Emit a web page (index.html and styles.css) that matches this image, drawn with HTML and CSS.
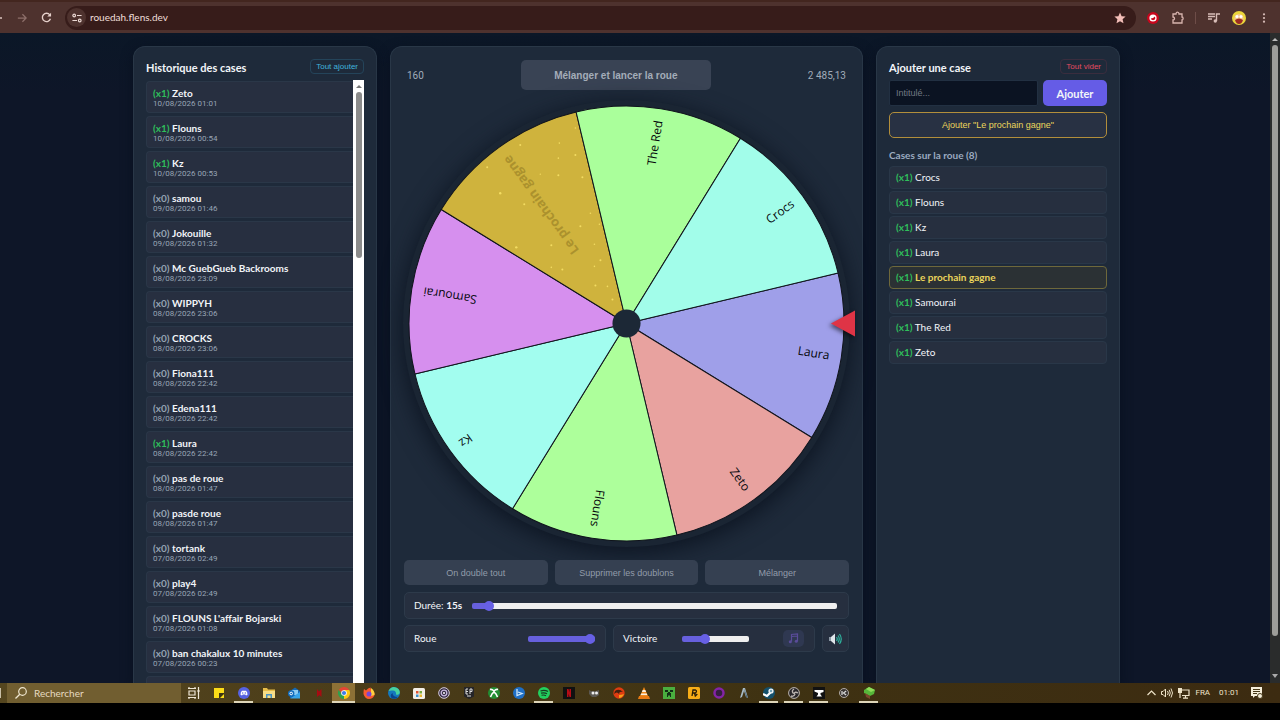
FILE: index.html
```html
<!DOCTYPE html>
<html lang="fr">
<head>
<meta charset="utf-8">
<title>Roue</title>
<link rel="stylesheet" href="styles.css">
</head>
<body>
<header class="toolbar">
  <button class="tool back" aria-label="Précédent"><svg width="12" height="12" viewBox="0 0 12 12"><path d="M1 6h10M6 1L1 6l5 5" fill="none" stroke="#dcc5c0" stroke-width="1.3"/></svg></button>
  <button class="tool" aria-label="Suivant"><svg width="10" height="10" viewBox="0 0 12 12"><path d="M1 6h10M6.500 1.500L11 6l-4.500 4.500" fill="none" stroke="#8d6f6a" stroke-width="1.500"/></svg></button>
  <button class="tool" aria-label="Actualiser"><svg width="11" height="11" viewBox="0 0 12 12"><path d="M10.300 7.300A4.500 4.500 0 1 1 9.600 3.200" fill="none" stroke="#e5d0cb" stroke-width="1.500"/><path d="M11 .8v4.200H6.800z" fill="#e5d0cb"/></svg></button>
  <div class="omnibox">
    <span class="site"><svg width="10" height="10" viewBox="0 0 12 12"><g fill="none" stroke="#ecd9d4" stroke-width="1.400"><circle cx="2.600" cy="3" r="1.600"/><path d="M6 3h5.500M.5 9H6"/><circle cx="9.300" cy="9" r="1.600"/></g></svg></span>
    <span class="url">rouedah.flens.dev</span>
    <svg class="star" width="12" height="12" viewBox="0 0 12 12"><path d="M6 .5l1.600 3.700 4 .4-3 2.700.9 4L6 9.200l-3.500 2.100.9-4-3-2.700 4-.4z" fill="#f2bdb7"/></svg>
  </div>
  <div class="extensions">
    <button class="tool" aria-label="Extension"><svg width="12" height="12" viewBox="0 0 12 12"><circle cx="6" cy="6" r="6" fill="#c9061d"/><circle cx="6" cy="6" r="3.600" fill="#fff"/><path d="M3.800 6.500a2.300 2.300 0 0 0 4.500 0L8 4.500 6 6z" fill="#c9061d"/></svg></button>
    <button class="tool" aria-label="Extensions"><svg width="13" height="13" viewBox="0 0 13 13"><path d="M2 3h3c0-2.500 3-2.500 3 0h3v3c1.500 0 1.500 3 0 3v3H2V9c2 0 2-3 0-3z" fill="none" stroke="#d8b5af" stroke-width="1.300"/></svg></button>
    <i class="divider"></i>
    <button class="tool" aria-label="Médias"><svg width="12" height="10" viewBox="0 0 12 10"><path d="M0 1h7M0 3.500h7M0 6h4M8.500 8V1H12" fill="none" stroke="#d8bdb8" stroke-width="1.400"/><circle cx="7.300" cy="8" r="1.700" fill="#d8bdb8"/></svg></button>
    <button class="tool" aria-label="Profil"><svg width="14" height="14" viewBox="0 0 14 14"><circle cx="7" cy="7" r="7" fill="#ead53a"/><circle cx="7" cy="7.500" r="4.600" fill="#f6c78d"/><path d="M3 9q4-3 8 0-1 4-4 4T3 9" fill="#9b2b22"/><circle cx="5" cy="5.500" r="1.500" fill="#fff"/><circle cx="9" cy="5.500" r="1.500" fill="#fff"/></svg></button>
    <button class="tool" aria-label="Menu"><svg width="4" height="10" viewBox="0 0 4 10"><g fill="#d8bdb8"><circle cx="2" cy="1.300" r="1.100"/><circle cx="2" cy="5" r="1.100"/><circle cx="2" cy="8.700" r="1.100"/></g></svg></button>
  </div>
</header>

<div class="viewport">
<main class="page">
  <section class="panel history">
    <div class="panel-head"><h2>Historique des cases</h2><button class="mini add-all">Tout ajouter</button></div>
    <div class="scroller">
      <ul class="log">
        <li><b class="on">(x1)</b> <strong>Zeto</strong><time>10/08/2026 01:01</time></li>
        <li><b class="on">(x1)</b> <strong>Flouns</strong><time>10/08/2026 00:54</time></li>
        <li><b class="on">(x1)</b> <strong>Kz</strong><time>10/08/2026 00:53</time></li>
        <li><b>(x0)</b> <strong>samou</strong><time>09/08/2026 01:46</time></li>
        <li><b>(x0)</b> <strong>Jokouille</strong><time>09/08/2026 01:32</time></li>
        <li><b>(x0)</b> <strong>Mc GuebGueb Backrooms</strong><time>08/08/2026 23:09</time></li>
        <li><b>(x0)</b> <strong>WIPPYH</strong><time>08/08/2026 23:06</time></li>
        <li><b>(x0)</b> <strong>CROCKS</strong><time>08/08/2026 23:06</time></li>
        <li><b>(x0)</b> <strong>Fiona111</strong><time>08/08/2026 22:42</time></li>
        <li><b>(x0)</b> <strong>Edena111</strong><time>08/08/2026 22:42</time></li>
        <li><b class="on">(x1)</b> <strong>Laura</strong><time>08/08/2026 22:42</time></li>
        <li><b>(x0)</b> <strong>pas de roue</strong><time>08/08/2026 01:47</time></li>
        <li><b>(x0)</b> <strong>pasde roue</strong><time>08/08/2026 01:47</time></li>
        <li><b>(x0)</b> <strong>tortank</strong><time>07/08/2026 02:49</time></li>
        <li><b>(x0)</b> <strong>play4</strong><time>07/08/2026 02:49</time></li>
        <li><b>(x0)</b> <strong>FLOUNS L'affair Bojarski</strong><time>07/08/2026 01:08</time></li>
        <li><b>(x0)</b> <strong>ban chakalux 10 minutes</strong><time>07/08/2026 00:23</time></li>
        <li class="next"></li>
      </ul>
      <div class="list-bar"><i class="arrow-up"></i><i class="list-thumb"></i></div>
    </div>
  </section>

  <section class="panel game">
    <div class="launch-row"><span>160</span><button class="launch">Mélanger et lancer la roue</button><span>2 485,13</span></div>
    <svg class="wheel" viewBox="-222 -222 444 444" role="img" aria-label="Roue">
      <circle class="ring" r="223"/>
      <g class="slices">
        <path fill="#9f9fe9" d="M0 0L211.100-50.300A217 217 0 0 1 184.800 113.700z"/>
        <path fill="#e8a29f" d="M0 0L184.800 113.700A217 217 0 0 1 50.300 211.100z"/>
        <path fill="#adff9b" d="M0 0L50.300 211.100A217 217 0 0 1-113.700 184.800z"/>
        <path fill="#a2fdef" d="M0 0L-113.700 184.800A217 217 0 0 1-211.100 50.300z"/>
        <path fill="#d68fee" d="M0 0L-211.100 50.300A217 217 0 0 1-184.800-113.700z"/>
        <path fill="#cfb33d" d="M0 0L-184.800-113.700A217 217 0 0 1-50.300-211.100z"/>
        <path fill="#aaff9b" d="M0 0L-50.300-211.100A217 217 0 0 1 113.700-184.800z"/>
        <path fill="#a2fdea" d="M0 0L113.700-184.800A217 217 0 0 1 211.100-50.300z"/>
      </g>
      <g fill="#f3dc62">
        <circle cx="-106" cy="-178" r="1"/><circle cx="-67" cy="-180" r=".8"/><circle cx="-51" cy="-195" r=".8"/><circle cx="-51" cy="-168" r="1"/><circle cx="-68" cy="-165" r=".8"/><circle cx="-139" cy="-156" r="1"/><circle cx="-86" cy="-149" r=".7"/><circle cx="-68" cy="-148" r="1"/><circle cx="-44" cy="-146" r="1"/><circle cx="-126" cy="-130" r="1.200"/><circle cx="-102" cy="-119" r="1"/><circle cx="-36" cy="-110" r=".8"/><circle cx="-46" cy="-97" r="1"/><circle cx="-27" cy="-99" r=".8"/><circle cx="-75" cy="-78" r="1"/><circle cx="-32" cy="-79" r=".8"/><circle cx="-110" cy="-76" r="1.200"/><circle cx="-26" cy="-63" r="1"/><circle cx="-32" cy="-57" r=".8"/><circle cx="-75" cy="-56" r=".8"/><circle cx="-64" cy="-54" r="1"/><circle cx="-31" cy="-38" r="1"/><circle cx="-19" cy="-37" r=".8"/><circle cx="-14" cy="-24" r="1"/>
      </g>
      <g class="names" text-anchor="end">
        <text transform="rotate(9)" x="205" y="4">Laura</text>
        <text transform="rotate(54)" x="205" y="4">Zeto</text>
        <text transform="rotate(99)" x="205" y="4">Flouns</text>
        <text transform="rotate(144)" x="205" y="4">Kz</text>
        <text transform="rotate(189)" x="205" y="4">Samourai</text>
        <text class="gold" transform="rotate(234)" x="205" y="5">Le prochain gagne</text>
        <text transform="rotate(279)" x="205" y="4">The Red</text>
        <text transform="rotate(324)" x="205" y="4">Crocs</text>
      </g>
      <circle class="hub" r="14"/>
      <path class="pointer" d="M204 0L228-13V13z"/>
    </svg>
    <div class="actions"><button>On double tout</button><button>Supprimer les doublons</button><button>Mélanger</button></div>
    <div class="box duration"><label for="dur">Durée: <b>15s</b></label><input id="dur" type="range" min="5" max="300" value="15" style="--fill:5%"></div>
    <div class="volumes">
      <div class="box"><label for="vr">Roue</label><input id="vr" class="small" type="range" value="100" style="--fill:100%"></div>
      <div class="box"><label for="vv">Victoire</label><input id="vv" class="small" type="range" value="32" style="--fill:34%">
        <button class="music" aria-label="Musique"><svg width="11" height="11" viewBox="0 0 11 11"><path d="M3.500 8.500V1.500L9.500 1v7M3.500 3.500L9.500 3" fill="none" stroke="#5a4c9a" stroke-width="1.200"/><circle cx="2.300" cy="8.800" r="1.500" fill="#5a4c9a"/><circle cx="8.300" cy="8.300" r="1.500" fill="#5a4c9a"/></svg></button></div>
      <button class="box mute" aria-label="Son"><svg width="13" height="12" viewBox="0 0 13 12"><path d="M0 4h2v4H0z" fill="#8d99a5"/><path d="M2 4l4-3.500v11L2 8z" fill="#dfe5ea"/><path d="M7.500 4q1.500 2 0 4M9 2.500q2.500 3.500 0 7M10.500 1q3.500 5 0 10" fill="none" stroke="#2eb5a0" stroke-width="1.200"/></svg></button>
    </div>
  </section>

  <section class="panel cases">
    <div class="panel-head"><h2>Ajouter une case</h2><button class="mini clear">Tout vider</button></div>
    <form class="add-form"><input type="text" placeholder="Intitulé..." aria-label="Intitulé"><button type="button">Ajouter</button></form>
    <button class="next-wins">Ajouter "Le prochain gagne"</button>
    <h3>Cases sur la roue (8)</h3>
    <ul class="slots">
      <li><b>(x1)</b> Crocs</li><li><b>(x1)</b> Flouns</li><li><b>(x1)</b> Kz</li><li><b>(x1)</b> Laura</li>
      <li class="special"><b>(x1)</b> <strong>Le prochain gagne</strong></li>
      <li><b>(x1)</b> Samourai</li><li><b>(x1)</b> The Red</li><li><b>(x1)</b> Zeto</li>
    </ul>
  </section>
</main>
<div class="page-bar"><i class="arrow-up"></i><i class="page-thumb"></i><i class="arrow-down"></i></div>
</div>

<footer class="taskbar">
  <i class="start"></i>
  <label class="search"><svg width="12" height="12" viewBox="0 0 12 12"><circle cx="7.500" cy="4.500" r="3.800" fill="none" stroke="#efe6cf" stroke-width="1.200"/><path d="M4.800 7.200L.5 11.500" stroke="#efe6cf" stroke-width="1.300"/></svg><input type="text" placeholder="Rechercher" aria-label="Rechercher"></label>
  <nav class="apps">
    <span><svg viewBox="0 0 12 12"><path d="M0 1.500h8M0 10.500h8M1 4h6v4H1zM1 0v2M7 0v2M1 10v2M7 10v2M10.500 0v12" fill="none" stroke="#eee6d5" stroke-width="1.200"/><path d="M9.500 3h2v2h-2z" fill="#eee6d5"/></svg></span>
    <span><svg viewBox="0 0 12 12"><path d="M1 1h10v10H1z" fill="#fcdc18"/><path d="M6 6h5v1L7 11H6z" fill="#3d3413"/></svg></span>
    <span class="open"><svg viewBox="0 0 12 12"><circle cx="6" cy="6" r="6" fill="#5662e2"/><path d="M2.500 7.800Q2.500 5 4 3.800l4 0Q9.500 5 9.500 7.800L8 8.500 7.300 7.600H4.700L4 8.500z" fill="#fff"/><circle cx="4.700" cy="6" r=".7" fill="#5662e2"/><circle cx="7.300" cy="6" r=".7" fill="#5662e2"/></svg></span>
    <span><svg viewBox="0 0 12 12"><path d="M0 1h4l1 1.500h7V11H0z" fill="#e7bd49"/><path d="M0 4h12v7H0z" fill="#f7dd87"/><path d="M3 7h6v4H7.500V8.500h-3V11H3z" fill="#4a93c4"/></svg></span>
    <span><svg viewBox="0 0 12 12"><path d="M2 4l5-3.500L12 4v7H2z" fill="#1769b5"/><path d="M4 3h6v5H4z" fill="#8ccbf2"/><path d="M2 11.500l10-6.500v6.500z" fill="#38a5ea"/><circle cx="3.200" cy="6.500" r="3.200" fill="#126dbe"/><circle cx="3.200" cy="6.500" r="1.300" fill="none" stroke="#fff"/></svg></span>
    <span><svg viewBox="0 0 12 12"><path d="M4 2l2 2.500L8.500 2v8L6.500 8 4 10z" fill="#a70b12"/></svg></span>
    <span class="open active"><svg viewBox="0 0 12 12"><path d="M6 6L.8 3A6 6 0 0 1 11.200 3z" fill="#e64435"/><path d="M6 6V3h5.200A6 6 0 0 1 6 12z" fill="#fbc812"/><path d="M6 6l0 6A6 6 0 0 1 .8 3L3.500 7.500z" fill="#2ca34c"/><circle cx="6" cy="6" r="2.800" fill="#fff"/><circle cx="6" cy="6" r="2.100" fill="#3d7de8"/></svg></span>
    <span><svg viewBox="0 0 12 12"><path d="M1 2l2 1.500Q5 1 7.500.5L8 2.500Q12 4 11.500 8 10 12 6 12T.5 7Q.3 4 1 2z" fill="#fa5b31"/><path d="M8 1q4 3 3.500 7L8 9z" fill="#ffd13d"/><circle cx="6" cy="7" r="2.500" fill="#7a46d5"/></svg></span>
    <span><svg viewBox="0 0 12 12"><circle cx="6" cy="6" r="6" fill="#1478bd"/><path d="M.5 4Q3-.5 7 .2 12 1.500 11.800 6 11 8.500 8 7.500 8.500 4 5 3.500 2 3.300.5 4" fill="#47d1a0"/><path d="M4.500 6q0 4 5.500 4-3 3-6.500 1-2-3 1-5" fill="#0a438d"/></svg></span>
    <span><svg viewBox="0 0 12 12"><rect y="1" width="12" height="11" rx="1.500" fill="#f3efe7"/><path d="M3 4h2.500v2.500H3z" fill="#e15433"/><path d="M6.500 4H9v2.500H6.500z" fill="#78a93c"/><path d="M3 7.500h2.500V10H3z" fill="#3a91cf"/><path d="M6.500 7.500H9V10H6.500z" fill="#e8b72e"/></svg></span>
    <span><svg viewBox="0 0 12 12"><circle cx="6" cy="6" r="5.300" fill="#332b42" stroke="#d7cde2"/><circle cx="6" cy="6" r="2.800" fill="none" stroke="#c6b8df" stroke-width="1.300"/><circle cx="6" cy="6" r="1" fill="#fff"/></svg></span>
    <span><svg viewBox="0 0 12 12"><path d="M1 0h10v9.500L6 12 1 9.500z" fill="#252528"/><path d="M3 2v5M3 2h2M3 4.500h2M3 7h2M7 7V2h2v2.500H7M4 9h4" fill="none" stroke="#ddd"/></svg></span>
    <span><svg viewBox="0 0 12 12"><circle cx="6" cy="6" r="6" fill="#228d32"/><path d="M2 2.500Q4 2 6 4q2-2 4-1.500M2.500 10Q4 6 6 5q2 1 3.500 5" fill="none" stroke="#fff" stroke-width="1.600"/></svg></span>
    <span><svg viewBox="0 0 12 12"><circle cx="6" cy="6" r="6" fill="#1f6fc5"/><path d="M4 2v6.500l5-2L5 5" fill="none" stroke="#cfe8fb" stroke-width="1.300"/></svg></span>
    <span class="open"><svg viewBox="0 0 12 12"><circle cx="6" cy="6" r="6" fill="#22d05e"/><path d="M2.500 4q4-1.300 7.500.5M3 6.200q3.500-1 6 .5M3.500 8.300q2.500-.8 4.500.4" fill="none" stroke="#173e22" stroke-width="1.200"/></svg></span>
    <span><svg viewBox="0 0 12 12"><path d="M0 0h12v12H0z" fill="#111"/><path d="M4 2h1.500L8 10H6.500zM4 2h1.500v8H4zM6.500 2H8v8H6.500z" fill="#b60c16"/></svg></span>
    <span><svg viewBox="0 0 12 12"><path d="M1 3l2 1h5l3-1v5l-3 2H4L1 7z" fill="#5b5852"/><circle cx="5" cy="6" r="1.500" fill="#eee"/><circle cx="8.500" cy="6" r="1.500" fill="#eee"/></svg></span>
    <span><svg viewBox="0 0 12 12"><circle cx="6" cy="6" r="5.700" fill="#df3c11"/><path d="M2 4q4-3 8 1Q6 4 6 7q-2-3-5 0" fill="#42200f"/><path d="M6 8q3 0 5-1-2 4-5 4z" fill="#f5a019"/></svg></span>
    <span><svg viewBox="0 0 12 12"><path d="M6 0l4 9H2z" fill="#f18a1d"/><path d="M4.700 3h2.600l.8 2H3.900zM3.200 6.500h5.600l.5 1.500H2.600z" fill="#f8eee0"/><path d="M1 9h10l1 3H0z" fill="#e97b14"/></svg></span>
    <span><svg viewBox="0 0 12 12"><path d="M0 0h12v12H0z" fill="#4aae3f"/><path d="M2 3h3v2H2zM7 3h3v2H7zM5 5h2v1h1v4H7V8.500H5V10H4V6h1z" fill="#113016"/></svg></span>
    <span><svg viewBox="0 0 12 12"><rect width="12" height="12" rx="1.500" fill="#f7ad17"/><path d="M4 9l1-6h2.500q2 1 0 3H4.500M6.500 6l.8 3 2-2" fill="none" stroke="#281d08" stroke-width="1.300"/></svg></span>
    <span><svg viewBox="0 0 12 12"><circle cx="6" cy="6" r="4.500" fill="#351e41" stroke="#8424a6" stroke-width="2.500"/></svg></span>
    <span><svg viewBox="0 0 12 12"><path d="M2 11L5 1h2l3 10-2-1-2-6-2 6z" fill="#a8bbc6"/><path d="M6 1l4 10-2-1z" fill="#516b7d"/></svg></span>
    <span class="open"><svg viewBox="0 0 12 12"><circle cx="6" cy="6" r="6" fill="#14506b"/><path d="M0 7l4 2 4-4" fill="none" stroke="#fff" stroke-width="2.200"/><circle cx="8" cy="4" r="2.600" fill="#eef2f4"/><circle cx="8" cy="4" r="1.200" fill="#6fa3b8"/></svg></span>
    <span class="open"><svg viewBox="0 0 12 12"><circle cx="6" cy="6" r="5.400" fill="#29272b" stroke="#bcb5b1"/><path d="M6 2Q3 4 5.500 6.500M10 6q-3-2-4 1M3 9q3 1 4-2" fill="none" stroke="#bcb5b1" stroke-width="1.400"/></svg></span>
    <span class="open"><svg viewBox="0 0 12 12"><path d="M0 0h12v12H0z" fill="#111"/><path d="M1.500 3h9v2L7.500 6v1.500L9 9.500H3.500L5 7.500V6L1.500 4.500z" fill="#fff"/></svg></span>
    <span><svg viewBox="0 0 12 12"><circle cx="6" cy="6" r="4.500" fill="#393533" stroke="#b0aaa5"/><path d="M4 4v4M8.200 4L5.500 6l2.700 2" fill="none" stroke="#ddd" stroke-width="1.200"/></svg></span>
    <span class="open"><svg viewBox="0 0 12 12"><path d="M6 0l6 3-1 4-4 2-6-3V3z" fill="#57b63a"/><path d="M6 0l6 3-4 2-5-3z" fill="#8ddd59"/><path d="M2 6l5 3v3L3 10z" fill="#7a472d"/></svg></span>
  </nav>
  <div class="tray">
    <svg width="9" height="6" viewBox="0 0 9 6"><path d="M.5 5l4-4 4 4" fill="none" stroke="#eee3c9" stroke-width="1.200"/></svg>
    <svg width="12" height="10" viewBox="0 0 12 10"><path d="M.5 3.500h1.500L4.500 1v8L2 6.500H.5zM6.500 3q1.500 2 0 4M8.200 1.800q2.200 3.200 0 6.400M10 .5q3 4.500 0 9" fill="none" stroke="#eee3c9"/></svg>
    <svg width="12" height="11" viewBox="0 0 12 11"><path d="M3.500 2H11v5.500H4M7.500 7.500V10M5 10.200h5M2 5v5" fill="none" stroke="#eee3c9" stroke-width="1.200"/><path d="M0 0h4v5H0z" fill="#eee3c9"/></svg>
    <span class="lang">FRA</span><span class="clock">01:01</span>
    <svg width="12" height="12" viewBox="0 0 12 12"><path d="M0 0h11v9H4l-2 2V9H0z" fill="#f5eedb"/><path d="M2 2.500h7M2 4.500h7M2 6.500h4" stroke="#463817"/><circle cx="9" cy="9" r="2.500" fill="#f5eedb" stroke="#463817"/></svg>
  </div>
</footer>
</body>
</html>
```
FILE: styles.css
```css
* { box-sizing: border-box; }
body {
  margin: 0;
  height: 100vh;
  display: flex;
  flex-direction: column;
  overflow: hidden;
  background: #000;
  color: #f2f5f9;
  font: 11px/15px Lato, "Open Sans", sans-serif;
}
button, input { font: inherit; color: inherit; margin: 0; }
button { padding: 0; border: 0; background: none; }
ul { list-style: none; margin: 0; padding: 0; }
h2, h3 { margin: 0; }
svg { display: block; flex: none; }

/* browser toolbar */
.toolbar {
  flex: none;
  height: 33px;
  display: flex;
  align-items: center;
  border-top: 2px solid #43261f;
  background: #4e322e;
}
.tool { width: 24px; height: 24px; display: flex; align-items: center; justify-content: center; }
.back { width: 10px; overflow: hidden; justify-content: flex-end; padding-right: 7px; }
.omnibox {
  flex: 1;
  height: 24px;
  margin-left: 7px;
  padding: 0 10px 0 2px;
  display: flex;
  align-items: center;
  gap: 4px;
  border-radius: 12px;
  background: #371c1a;
}
.site {
  width: 19px; height: 19px;
  display: flex; align-items: center; justify-content: center;
  border-radius: 50%;
  background: #4e322e;
}
.url { flex: 1; font-size: 10px; color: #f0dfdb; }
.extensions { display: flex; align-items: center; padding: 0 4px; }
.extensions .tool { width: 25px; }
.divider { width: 1px; height: 12px; margin: 0 5px; background: #6e4d48; }

/* page area */
.viewport { flex: 1; min-height: 0; display: flex; background: #0e1628; }
.page {
  flex: 1;
  min-width: 0;
  display: grid;
  grid-template-columns: minmax(0, 244px) minmax(0, 473px) minmax(0, 244px);
  justify-content: center;
  gap: 13px;
  padding: 13px 17px 0 0;
  background: linear-gradient(#0b1727, #0e1628 60px);
}
.panel {
  min-height: 0;
  padding: 12px 12px 0;
  border: 1px solid #293747;
  border-bottom: 0;
  border-radius: 12px 12px 0 0;
  background: #1e2a3a;
  box-shadow: 0 4px 12px #08101f;
}
.panel-head { display: flex; justify-content: space-between; height: 21px; }
h2 { font-size: 11px; line-height: 18px; }
.mini {
  height: 15px;
  padding: 0 5px;
  border: 1px solid #24445a;
  border-radius: 4px;
  color: #41b4dc;
  font: 8px/13px "Liberation Sans", Arial, sans-serif;
}
.clear { border-color: #3a2d3e; color: #e34b61; }

/* history */
.history { display: flex; flex-direction: column; }
.scroller { flex: 1; min-height: 0; display: flex; overflow: hidden; }
.log { flex: 1; display: flex; flex-direction: column; gap: 3px; padding-top: 1px; }
.log li {
  flex: none;
  height: 32px;
  padding: 5px 6px 0;
  border: 1px solid #2a3748;
  border-right: 0;
  border-radius: 4px 0 0 4px;
  background: #272f40;
  font-size: 10px;
  line-height: 12px;
  white-space: nowrap;
}
.log b { color: #95a3b2; }
.log b.on, .slots b { color: #2fbf5b; }
.log time { display: block; font: 8px/10px Roboto, sans-serif; color: #98a5b5; }
.list-bar { width: 11px; display: flex; flex-direction: column; align-items: center; background: #fff; }
.list-thumb { width: 6px; height: 166px; margin-top: 4px; border-radius: 3px; background: #8b8b8b; }
.arrow-up, .arrow-down { border: 3px solid transparent; }
.arrow-up { border-top: 0; border-bottom: 3px solid #777; margin-top: 5px; }
.arrow-down { border-bottom: 0; border-top: 4px solid #aaa; }

/* wheel panel */
.game { padding: 13px; }
.launch-row {
  display: flex;
  justify-content: space-between;
  align-items: center;
  padding: 0 3px;
  color: #a0acb9;
  font: 10px/15px Roboto, sans-serif;
}
.launch {
  width: 190px;
  height: 30px;
  border-radius: 5px;
  background: #394354;
  color: #a4adb9;
  font: bold 10px/15px "Liberation Sans", Arial, sans-serif;
}
.wheel { width: 100%; margin: 11px 0 14px; overflow: visible; }
.ring { fill: #1a2533; filter: drop-shadow(0 5px 12px #0b1320); }
.slices { stroke: #10141c; stroke-width: 1; stroke-linejoin: round; }
.names { font-family: "Open Sans", "Noto Sans", sans-serif; font-size: 12px; fill: #05080c; }
.gold { font-size: 13px; font-weight: bold; fill: #ab912d; }
.hub { fill: #1c2836; }
.pointer { fill: #df3446; filter: drop-shadow(-2px 2px 2px #0008); }
.actions { display: grid; grid-template-columns: repeat(3, 1fr); gap: 7px; margin-bottom: 7px; }
.actions button {
  height: 25px;
  border-radius: 5px;
  background: #354051;
  color: #929caa;
  font: 9px/12px "Liberation Sans", Arial, sans-serif;
}
.box {
  height: 27px;
  display: flex;
  align-items: center;
  padding: 0 10px 0 9px;
  border: 1px solid #2d3a4a;
  border-radius: 5px;
  background: #262f3f;
  font-size: 10px;
}
.duration { gap: 10px; padding-right: 11px; }
.volumes { display: grid; grid-template-columns: 1fr 1fr 27px; gap: 7px; margin-top: 6px; }
input[type="range"] {
  -webkit-appearance: none;
  appearance: none;
  flex: 1;
  min-width: 0;
  height: 10px;
  background: none;
}
input.small { flex: none; width: 67px; margin-left: auto; }
input[type="range"]::-webkit-slider-runnable-track {
  height: 6px;
  border-radius: 2px;
  background: linear-gradient(90deg, #6760dd var(--fill), #efefef var(--fill));
}
input[type="range"]::-webkit-slider-thumb {
  -webkit-appearance: none;
  width: 10px; height: 10px;
  margin-top: -2px;
  border-radius: 50%;
  background: #6760e4;
}
.music {
  width: 21px; height: 17px;
  margin-left: 34px;
  display: flex; align-items: center; justify-content: center;
  border-radius: 5px;
  background: #2f3851;
}
.box.mute { padding: 0; justify-content: center; }

/* add panel */
.add-form { display: flex; gap: 5px; margin-bottom: 6px; }
.add-form input {
  flex: 1;
  min-width: 0;
  height: 26px;
  padding: 0 6px;
  border: 1px solid #223042;
  border-radius: 2px;
  background: #0b1322;
  font: 9px/12px "Liberation Sans", Arial, sans-serif;
}
.add-form input::placeholder { color: #727983; opacity: 1; }
.add-form button { width: 64px; height: 26px; border-radius: 5px; background: #655ce6; font-weight: bold; }
.next-wins {
  width: 100%;
  height: 26px;
  border: 1px solid #b28e3b;
  border-radius: 5px;
  background: #283143;
  color: #ecd65c;
  font: 9px/12px "Liberation Sans", Arial, sans-serif;
}
h3 { margin: 10px 0 4px; font-size: 10px; line-height: 14px; color: #9cabc0; }
.slots { display: grid; gap: 2px; }
.slots li {
  height: 23px;
  padding: 0 6px;
  border: 1px solid #293748;
  border-radius: 4px;
  background: #262f3f;
  font-size: 10px;
  line-height: 21px;
}
.slots .special { border-color: #6e683b; background: #2b3134; }
.special strong { color: #ecd55b; }

/* page scrollbar */
.page-bar { width: 10px; display: flex; flex-direction: column; align-items: center; background: #2a2c2c; }
.page-bar .arrow-up { border-bottom-color: #bbb; }
.page-thumb { width: 6px; flex: 1; margin: 4px 0 38px; border-radius: 3px; background: #9d9d99; }
.arrow-down { margin-bottom: 5px; }

/* taskbar */
.taskbar { flex: none; height: 20px; margin-bottom: 17px; display: flex; background: linear-gradient(90deg, #55461f, #3f3212 60%, #3c2b11); }
.start { width: 1px; margin: 5px 6px 5px 0; background: #c9bfa6; }
.search { width: 174px; display: flex; align-items: center; gap: 7px; padding-left: 8px; background: #715e30; }
.search input { width: 120px; border: 0; padding: 0; background: none; font-size: 10px; }
.search input::placeholder { color: #e7dbc0; opacity: 1; }
.apps { display: flex; }
.apps span { width: 25px; display: flex; align-items: center; justify-content: center; border-top: 2px solid transparent; border-bottom: 2px solid transparent; }
.apps svg { width: 12px; height: 12px; }
.apps .open { width: 19px; margin: 0 3px; border-bottom-color: #ded5b8; }
.apps .active { width: 23px; margin: 0 1px; border-top-color: #8e7136; background: #8e7136; }
.tray { margin-left: auto; padding-right: 17px; display: flex; align-items: center; gap: 5px; font: 9px/12px Roboto, sans-serif; color: #eee3c9; }
.lang { margin-left: 1px; font-size: 8px; }
.clock { margin: 0 7px 0 4px; font-size: 8px; }
```
